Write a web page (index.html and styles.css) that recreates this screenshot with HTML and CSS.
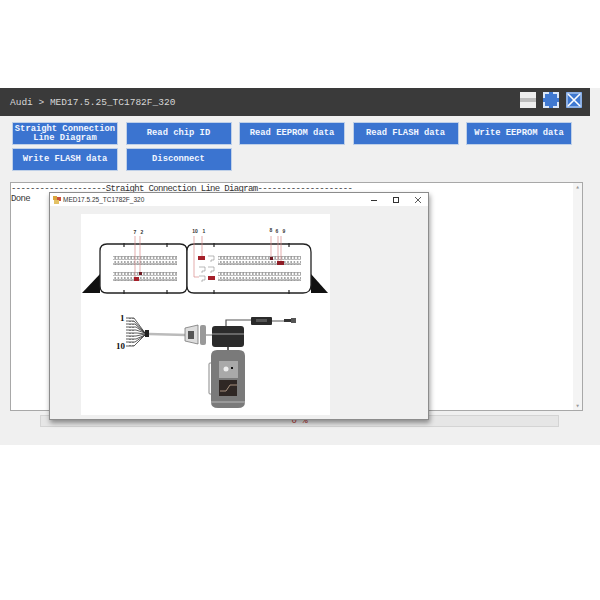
FILE: index.html
```html
<!DOCTYPE html>
<html lang="en">

<head>
    <meta charset="UTF-8">
    <meta name="viewport" content="width=device-width, initial-scale=1.0">
    <title>MED17.5.25_TC1782F_320</title>

    <link rel="stylesheet" href="styles.css">
</head>

<body>
    <div class="app">
        <div class="titlebar">
            <span class="crumb">Audi &gt; MED17.5.25_TC1782F_320</span>
            <div class="win-btns">
                <svg class="win-btn" viewBox="0 0 16 16">
                    <rect width="16" height="16" fill="#eee" />
                    <rect y="6" width="16" height="4" fill="#bdbdbd" />
                </svg>
                <svg class="win-btn" viewBox="0 0 16 16">
                    <rect width="16" height="16" fill="#3f78d0" />
                    <path d="M1 6V1H6M10 1H15V6M15 10V15H10M6 15H1V10" fill="none" stroke="#d8e6fa" stroke-width="2" />
                </svg>
                <svg class="win-btn" viewBox="0 0 16 16">
                    <rect width="16" height="16" fill="#3f78d0" />
                    <rect x="1" y="1" width="14" height="14" fill="none" stroke="#d8e6fa" />
                    <path d="M2 2L14 14M14 2L2 14" stroke="#fff" stroke-width="1.6" />
                </svg>
            </div>
        </div>

        <div class="actions">
            <button class="action">Straight Connection<br>Line Diagram</button>
            <button class="action">Read chip ID</button>
            <button class="action">Read EEPROM data</button>
            <button class="action">Read FLASH data</button>
            <button class="action">Write EEPROM data</button>
            <button class="action">Write FLASH data</button>
            <button class="action">Disconnect</button>
        </div>

        <div class="log">
            <div class="log-text">
                <div class="log-line">--------------------Straight Connection Line Diagram--------------------</div>
                <div class="log-line">Done</div>
            </div>
            <div class="scroll">
                <span class="arrow">&#9652;</span>
                <span class="arrow">&#9662;</span>
            </div>
        </div>

        <div class="progress">0 %</div>

        <div class="popup">
            <div class="popup-bar">
                <svg class="popup-icon" viewBox="0 0 8 8">
                    <rect width="4" height="4" fill="#d9a53c" />
                    <rect x="4" y="1" width="4" height="4" fill="#c8503c" />
                    <rect x="1" y="4" width="5" height="4" fill="#e3c164" />
                </svg>
                <span class="popup-title">MED17.5.25_TC1782F_320</span>
                <div class="popup-ctrls">
                    <svg class="ctrl" viewBox="0 0 8 8"><path d="M1 4.5H7" stroke="#333" /></svg>
                    <svg class="ctrl" viewBox="0 0 8 8"><rect x="1.5" y="1.5" width="5" height="5" fill="none" stroke="#333" /></svg>
                    <svg class="ctrl" viewBox="0 0 8 8"><path d="M1 1L7 7M7 1L1 7" stroke="#333" stroke-width=".8" /></svg>
                </div>
            </div>
            <div class="popup-body">
                <svg class="diagram" viewBox="81 214 249 201">
                    <defs>
                        <pattern id="pins" x="0" y="0" width="3.2" height="4" patternUnits="userSpaceOnUse">
                            <rect x=".4" y=".6" width="2.4" height="2.8" fill="#fff" stroke="#8a8a8a" stroke-width=".6" />
                        </pattern>
                    </defs>

                    <!-- ECU connector -->
                    <path d="M82 293L100 274V293Z" fill="#111" />
                    <path d="M328 293L311 274V293Z" fill="#111" />
                    <path d="M107 244H180Q187 244 187 251V286Q187 293 180 293H107Q100 293 100 286V251Q100 244 107 244Z" fill="#fff" stroke="#222" stroke-width="1.3" />
                    <path d="M194 244H303Q311 244 311 252V285Q311 293 303 293H194Q187 293 187 286V251Q187 244 194 244Z" fill="#fff" stroke="#222" stroke-width="1.3" />
                    <path d="M124 243V247M167 243V247M124 290V294M167 290V294M214 243V247M289 243V247M214 290V294M289 290V294" stroke="#222" stroke-width="1.2" />

                    <rect x="113" y="256" width="64" height="4" fill="url(#pins)" />
                    <rect x="113" y="261" width="64" height="4" fill="url(#pins)" />
                    <rect x="113" y="272" width="64" height="4" fill="url(#pins)" />
                    <rect x="113" y="277" width="64" height="4" fill="url(#pins)" />
                    <rect x="218" y="256" width="83" height="4" fill="url(#pins)" />
                    <rect x="218" y="261" width="83" height="4" fill="url(#pins)" />
                    <rect x="218" y="272" width="83" height="4" fill="url(#pins)" />
                    <rect x="218" y="277" width="83" height="4" fill="url(#pins)" />

                    <path d="M208 256h6v4h-3v2M199 267h6v4h-3v2M208 267h6v4h-3v2M199 276h6v4h-3v2" fill="#fff" stroke="#8a8a8a" stroke-width=".6" />

                    <!-- red leads -->
                    <path d="M135 236V277M140 236V274M194 236V277H199M202 236V256M271 236V258M278 236V262M281 236V262" fill="none" stroke="#d98a8a" stroke-width=".7" />
                    <rect x="134" y="277" width="5" height="4" fill="#a5202a" />
                    <rect x="139" y="272" width="3" height="3" fill="#6e1a22" />
                    <rect x="198" y="256" width="7" height="4" fill="#a5202a" />
                    <rect x="208" y="276" width="7" height="4" fill="#a5202a" />
                    <rect x="270" y="257" width="3" height="3" fill="#6e1a22" />
                    <rect x="277" y="261" width="7" height="4" fill="#8f1c26" />

                    <text class="pin-no" x="135" y="234">7</text>
                    <text class="pin-no" x="142" y="234">2</text>
                    <text class="pin-no" x="195" y="233">10</text>
                    <text class="pin-no" x="204" y="233">1</text>
                    <text class="pin-no" x="271" y="232">8</text>
                    <text class="pin-no" x="277" y="233">6</text>
                    <text class="pin-no" x="284" y="233">9</text>

                    <!-- harness -->
                    <text class="wire-no" x="120" y="321">1</text>
                    <text class="wire-no" x="116" y="349">10</text>
                    <path d="M126 318H134L145 333M126 321H134L145 333M126 324H135L145 333M126 327H136L145 333M126 330H136L145 333M126 333H137L145 334M126 336H136L145 334M126 339H136L145 335M126 342H135L145 335M126 346H134L145 335" fill="none" stroke="#333" stroke-width=".8" />
                    <path d="M130 318V346M133 318V346" stroke="#444" stroke-width="1" stroke-dasharray="1 2" />
                    <rect x="145" y="330" width="4" height="7" fill="#222" />
                    <path d="M149 334L186 335" stroke="#bbb" stroke-width="2.4" />
                    <path d="M185 328L198 325V344L185 341Z" fill="#ddd" stroke="#777" stroke-width=".8" />
                    <rect x="188" y="331" width="6" height="8" fill="#555" />
                    <rect x="200" y="325" width="6" height="20" rx="2" fill="#999" />
                    <path d="M206 335H212" stroke="#777" />
                    <rect x="212" y="326" width="32" height="21" rx="3" fill="#2b2b2b" />
                    <rect x="212" y="333" width="32" height="2" fill="#666" />
                    <path d="M226 326V320H251M272 321H284" fill="none" stroke="#555" stroke-width="1.2" />
                    <rect x="251" y="317" width="21" height="8" rx="1" fill="#2a2a2a" />
                    <rect x="256" y="319" width="11" height="3" fill="#555" />
                    <rect x="284" y="319" width="7" height="3" fill="#333" />
                    <rect x="291" y="318" width="5" height="5" fill="#555" />

                    <!-- device -->
                    <path d="M228 347V351" stroke="#666" stroke-width="2" />
                    <rect x="209" y="363" width="4" height="31" rx="1" fill="none" stroke="#888" />
                    <path d="M217 350H239Q245 350 245 356V402Q245 408 238 408H218Q211 408 211 402V356Q211 350 217 350Z" fill="#7a7a7a" />
                    <rect x="219" y="361" width="19" height="17" fill="#a9a9a9" />
                    <circle cx="226" cy="369" r="2.5" fill="#eee" />
                    <rect x="231" y="367" width="2" height="2" fill="#111" />
                    <rect x="219" y="380" width="18" height="16" fill="#2f2724" />
                    <path d="M220 391H226L230 385H237" fill="none" stroke="#a8917e" />
                    <rect x="211" y="401" width="34" height="2" fill="#999" />
                </svg>
            </div>
        </div>
    </div>
</body>

</html>
```

FILE: styles.css
```css
body {
    margin: 0;
    background-color: #fff;
}

.app {
    position: relative;
    margin-top: 88px;
    height: 357px;
    background-color: #f0f0f0;
    font-family: "Liberation Mono", monospace;
}

.titlebar {
    display: flex;
    align-items: center;
    justify-content: space-between;
    box-sizing: border-box;
    width: 590px;
    height: 28px;
    padding: 0 8px 0 10px;
    background-color: #3a3a3a;
    color: #d6d6d6;
}

.crumb {
    font-size: 9.5px;
}

.win-btns {
    display: flex;
    gap: 7px;
    margin-top: -4px;
}

.win-btn {
    width: 16px;
    height: 16px;
}

.actions {
    display: grid;
    grid-template-columns: repeat(5, 106px);
    grid-auto-rows: 23px;
    column-gap: 7.5px;
    row-gap: 3px;
    padding: 6px 0 0 12px;
}

.action {
    padding: 0;
    border: 1px solid #bfd0e8;
    background-color: #3b74d0;
    color: #f2f6ff;
    font-family: "Liberation Mono", monospace;
    font-size: 8.8px;
    font-weight: bold;
    line-height: 9px;
}

.log {
    display: flex;
    box-sizing: border-box;
    width: 573px;
    height: 229px;
    margin: 11px 0 0 10px;
    border: 1px solid #a8a8a8;
    background-color: #fff;
}

.log-text {
    flex: 1;
    padding-top: 1px;
    color: #333;
    font-size: 9px;
    letter-spacing: -0.66px;
    line-height: 10px;
}

.log-line {
    width: fit-content;
    white-space: pre;
}

.scroll {
    display: flex;
    flex-direction: column;
    justify-content: space-between;
    width: 9px;
    background-color: #f4f4f4;
    color: #9a9a9a;
    font-size: 7px;
    text-align: center;
}

.progress {
    box-sizing: border-box;
    width: 519px;
    height: 12px;
    margin: 4px 0 0 40px;
    border: 1px solid #d4d4d4;
    background-color: #e6e6e6;
    color: #b03030;
    font-size: 9px;
    line-height: 10px;
    text-align: center;
}

.popup {
    position: absolute;
    top: 104px;
    left: 49px;
    display: flex;
    flex-direction: column;
    box-sizing: border-box;
    width: 380px;
    height: 228px;
    border: 1px solid #8c8c8c;
    background-color: #f0f0f0;
    box-shadow: 1px 3px 5px rgba(0, 0, 0, 0.4);
}

.popup-bar {
    display: flex;
    align-items: center;
    height: 13px;
    padding: 0 0 0 3px;
    background-color: #fff;
}

.popup-icon {
    width: 8px;
    height: 8px;
    margin-right: 2px;
}

.popup-title {
    flex: 1;
    color: #333;
    font-family: "Liberation Sans", sans-serif;
    font-size: 6.5px;
}

.popup-ctrls {
    display: flex;
    gap: 14px;
    padding-right: 6px;
}

.ctrl {
    width: 8px;
    height: 8px;
}

.popup-body {
    padding: 8px 0 0 31px;
}

.diagram {
    display: block;
    width: 249px;
    height: 201px;
    background-color: #fff;
}

.pin-no {
    fill: #333;
    font-family: "Liberation Sans", sans-serif;
    font-size: 5px;
    font-weight: bold;
    text-anchor: middle;
}

.wire-no {
    fill: #111;
    font-family: "Liberation Serif", serif;
    font-size: 9px;
    font-weight: bold;
}
```
